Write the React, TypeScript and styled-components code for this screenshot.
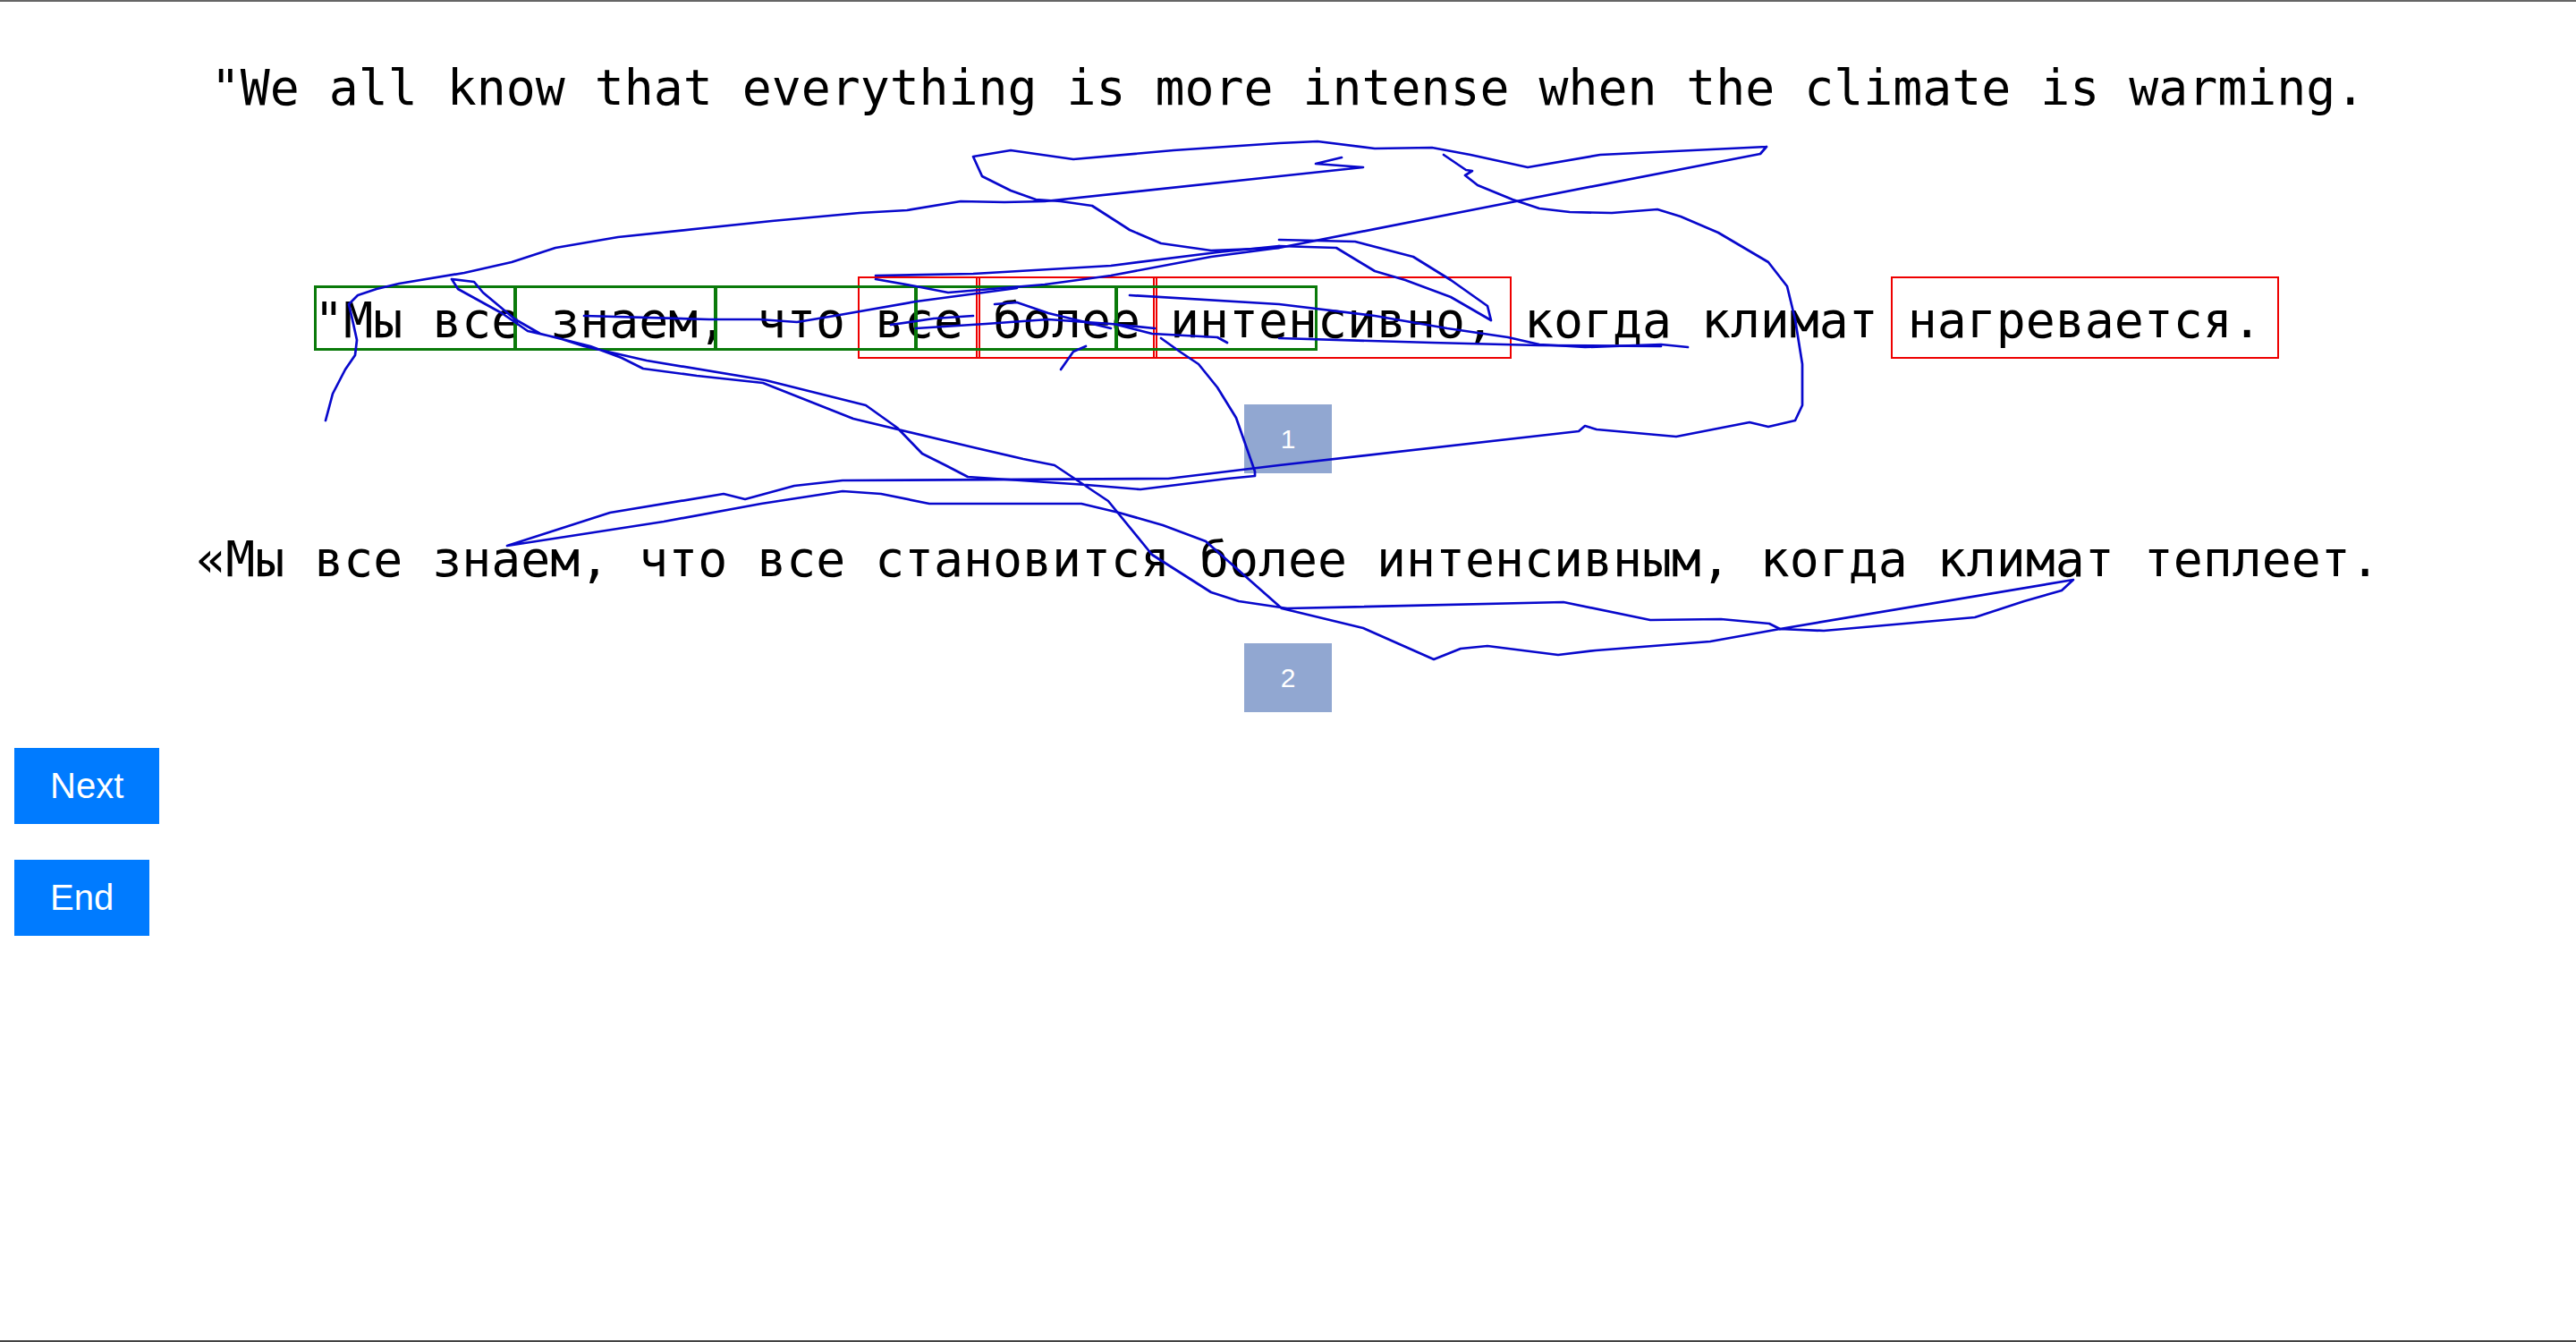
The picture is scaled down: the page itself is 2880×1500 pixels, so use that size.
import React from "react";
import styled, { createGlobalStyle } from "styled-components";

const GlobalStyle = createGlobalStyle`
  html, body {
    margin: 0;
    padding: 0;
    background: #ffffff;
  }
  body {
    font-family: "Liberation Sans", Arial, sans-serif;
  }
`;

// freehand pointer trace, in page pixels
const trace = [
  "364,470 372,440 386,413 397,397 399,380 393,353 390,340 400,330 421,323 446,317 519,305 572,293 621,277 691,265 786,255 863,247 961,238 1014,235 1074,225 1123,226 1168,225 1430,197 1524,187 1471,183 1500,176",
  "1975,164 1934,166 1789,173 1708,187 1644,173 1601,165 1537,166 1473,158 1430,160 1312,168 1200,178 1130,168 1088,175 1098,197 1130,213 1158,223 1186,225 1221,230 1263,257 1298,272 1354,280 1430,277 1695,225 1968,172 1975,164",
  "1614,173 1639,190 1646,191 1638,196 1652,207 1691,223 1721,233 1755,237 1802,238 1853,234 1879,242 1921,260 1977,293 1998,320 2007,357 2015,407 2015,453 2007,470 1977,477 1956,472 1874,488 1785,480 1772,476 1765,482 1430,520 1306,535 942,537 888,543 833,558 809,552 682,573 567,610 645,598 742,583 851,563 942,549 985,552 1039,563 1209,563 1251,573 1300,587 1348,605 1433,680 1524,702 1603,737 1633,725 1663,722 1742,732 1784,727 1912,717 1990,703 2318,648 2305,660 2263,672 2208,690 2039,705 1990,703",
  "1298,378 1319,393 1340,407 1361,433 1382,467 1396,507 1403,527 1403,532 1372,535 1275,547 1215,542 1082,533 1057,520 1031,507 1003,478 968,453 856,425 723,403 653,387 625,378 590,370 561,350 512,323 505,312 530,315 540,327 576,357 604,373 660,387 695,400 719,412 779,420 853,428 954,468 1088,500 1144,513 1179,520 1239,560 1288,620 1354,662 1385,672 1439,680 1748,673 1845,693 1924,692 1978,697 1990,703",
  "979,308 1088,306 1242,297 1361,282 1430,275",
  "979,312 1024,320 1060,327 1168,318 1242,308 1354,287 1430,277",
  "653,353 793,357 849,357 891,360 933,353 1024,337 1137,322",
  "996,363 1044,356 1088,353",
  "1024,367 1102,362 1172,357 1242,362 1291,367",
  "1112,340 1137,338 1172,350 1242,367",
  "1249,363 1288,373 1361,377 1372,383",
  "1263,330 1430,340 1537,353 1618,367 1686,377 1721,385 1772,388 1857,385 1887,388",
  "1430,378 1601,383 1721,386 1857,387",
  "1430,275 1494,277 1537,303 1571,313 1622,332 1667,358 1663,342 1622,313 1580,287 1515,270 1430,268",
  "1186,413 1200,393 1214,387",
];

const target = [
  { text: "\"Мы все знаем, что ", marked: false },
  { text: "все", marked: true },
  { text: " ", marked: false },
  { text: "более", marked: true },
  { text: " ", marked: false },
  { text: "интенсивно,", marked: true },
  { text: " когда климат ", marked: false },
  { text: "нагревается.", marked: true },
];

const Page = styled.div`
  position: relative;
  height: 1500px;
  box-sizing: border-box;
  padding-top: 65px;
  box-shadow: inset 0 2px 0 #666666, inset 0 -2px 0 #444444;
  overflow: hidden;
`;

const Sentence = styled.div<{ $gap?: number }>`
  font-family: "DejaVu Sans Mono", monospace;
  font-size: 54.8px;
  line-height: 66px;
  color: #000000;
  text-align: center;
  white-space: pre;
  margin-top: ${(p) => p.$gap ?? 0}px;
`;

const AlignedLine = styled.div`
  position: relative;
  width: fit-content;
  margin: 0 auto;
`;

const Word = styled.span<{ $marked: boolean }>`
  position: relative;

  &::after {
    content: "";
    display: ${(p) => (p.$marked ? "block" : "none")};
    position: absolute;
    left: -19px;
    right: -19px;
    top: -17px;
    bottom: -11px;
    border: 2px solid #ee0000;
  }
`;

const SourceBox = styled.div<{ $index: number }>`
  position: absolute;
  top: -6px;
  left: ${(p) => p.$index * 224}px;
  width: 226px;
  height: 73px;
  box-sizing: border-box;
  border: 3px solid #0a7a0a;
`;

const Badge = styled.div<{ $gap: number }>`
  width: 98px;
  height: 77px;
  margin: ${(p) => p.$gap}px auto 0;
  background: #91a7d1;
  color: #ffffff;
  font-family: "Liberation Sans", Arial, sans-serif;
  font-size: 30px;
  display: flex;
  align-items: center;
  justify-content: center;
`;

const Controls = styled.div`
  margin-top: 40px;
  padding-left: 16px;
  display: flex;
  flex-direction: column;
  align-items: flex-start;
  gap: 40px;
`;

const ActionButton = styled.button`
  height: 85px;
  padding: 0 40px;
  border: none;
  border-radius: 0;
  background: #007bff;
  color: #ffffff;
  font-family: "Liberation Sans", Arial, sans-serif;
  font-size: 40px;
  cursor: pointer;
`;

const Trace = styled.svg`
  position: absolute;
  top: 0;
  left: 0;
  pointer-events: none;
`;

function App() {
  return (
    <>
      <GlobalStyle />
      <Page>
        <Sentence>"We all know that everything is more intense when the climate is warming.</Sentence>

        <Sentence $gap={194}>
          <AlignedLine>
            {target.map((seg, i) => (
              <Word key={i} $marked={seg.marked}>
                {seg.text}
              </Word>
            ))}
            {[0, 1, 2, 3, 4].map((i) => (
              <SourceBox key={i} $index={i} />
            ))}
          </AlignedLine>
        </Sentence>
        <Badge $gap={61}>1</Badge>

        <Sentence $gap={63}>«Мы все знаем, что все становится более интенсивным, когда климат теплеет.</Sentence>
        <Badge $gap={61}>2</Badge>

        <Controls>
          <ActionButton>Next</ActionButton>
          <ActionButton>End</ActionButton>
        </Controls>

        <Trace width="2880" height="1500" viewBox="0 0 2880 1500">
          {trace.map((pts, i) => (
            <polyline
              key={i}
              points={pts}
              fill="none"
              stroke="#0808cc"
              strokeWidth={2.7}
              strokeLinejoin="round"
              strokeLinecap="round"
            />
          ))}
        </Trace>
      </Page>
    </>
  );
}

export default App;
